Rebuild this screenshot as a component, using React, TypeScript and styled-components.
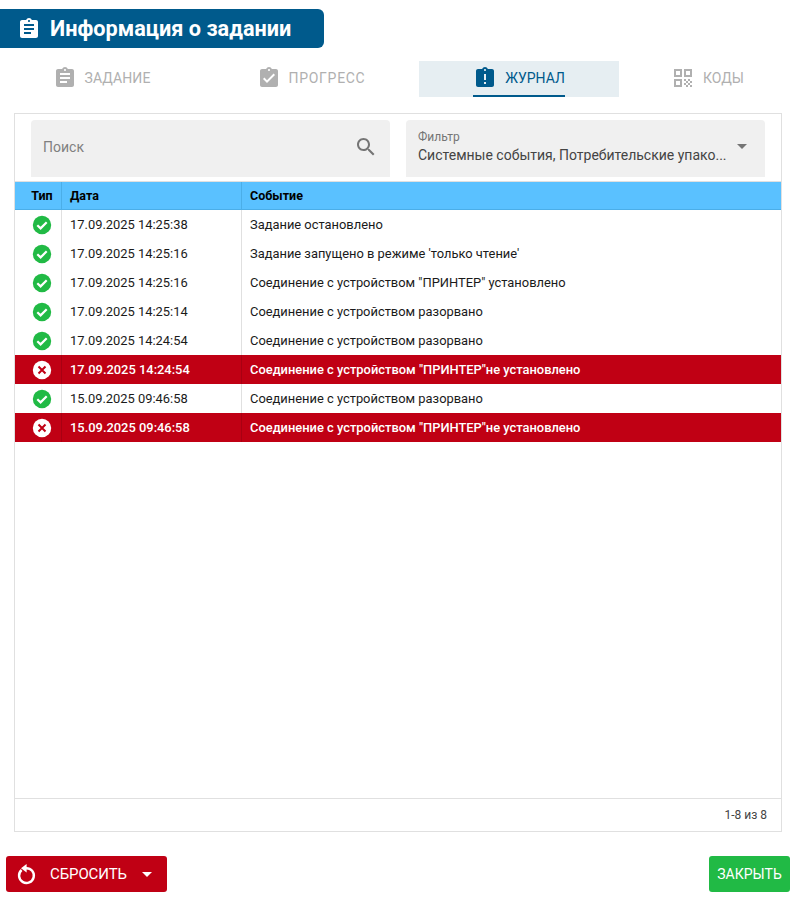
import styled, { createGlobalStyle } from 'styled-components';

const GlobalStyle = createGlobalStyle`
  html, body {
    margin: 0;
    padding: 0;
    background: #fff;
    font-family: Roboto, "Liberation Sans", sans-serif;
  }
`;

const blue = '#005a8c';
const red = '#c00014';
const green = '#21ba45';

const ICONS = {
  task: 'M19 3h-4.18C14.4 1.84 13.3 1 12 1c-1.3 0-2.4.84-2.82 2H5c-1.1 0-2 .9-2 2v14c0 1.1.9 2 2 2h14c1.1 0 2-.9 2-2V5c0-1.1-.9-2-2-2zm-7 0c.55 0 1 .45 1 1s-.45 1-1 1-1-.45-1-1 .45-1 1-1zm2 14H7v-2h7v2zm3-4H7v-2h10v2zm0-4H7V7h10v2z',
  progress: 'M19 3h-4.18C14.4 1.84 13.3 1 12 1c-1.3 0-2.4.84-2.82 2H5c-1.1 0-2 .9-2 2v14c0 1.1.9 2 2 2h14c1.1 0 2-.9 2-2V5c0-1.1-.9-2-2-2zm-7 0c.55 0 1 .45 1 1s-.45 1-1 1-1-.45-1-1 .45-1 1-1zm-2 14l-4-4 1.41-1.41L10 14.17l6.59-6.59L18 9l-8 8z',
  journal: 'M19 3h-4.18C14.4 1.84 13.3 1 12 1c-1.3 0-2.4.84-2.82 2H5c-1.1 0-2 .9-2 2v14c0 1.1.9 2 2 2h14c1.1 0 2-.9 2-2V5c0-1.1-.9-2-2-2zm-6 15h-2v-2h2v2zm0-4h-2V8h2v6zm-1-9c-.55 0-1-.45-1-1s.45-1 1-1 1 .45 1 1-.45 1-1 1z',
  codes: 'M3 11h8V3H3v8zm2-6h4v4H5V5zM3 21h8v-8H3v8zm2-6h4v4H5v-4zM13 3v8h8V3h-8zm6 6h-4V5h4v4zM13 13h2v2h-2zM15 15h2v2h-2zM13 17h2v2h-2zM15 19h2v2h-2zM17 13h2v2h-2zM19 15h2v2h-2zM17 17h2v2h-2zM19 19h2v2h-2z',
  search: 'M15.5 14h-.79l-.28-.27C15.41 12.59 16 11.11 16 9.5 16 5.91 13.09 3 9.5 3S3 5.91 3 9.5 5.91 16 9.5 16c1.61 0 3.09-.59 4.23-1.57l.27.28v.79l5 4.99L20.49 19l-4.99-5zm-6 0C7.01 14 5 11.99 5 9.5S7.01 5 9.5 5 14 7.01 14 9.5 11.99 14 9.5 14z',
};

type IconName = keyof typeof ICONS;

const tabs: { name: string; icon: IconName; active?: boolean; spacing?: number }[] = [
  { name: 'ЗАДАНИЕ', icon: 'task', spacing: 0.1 },
  { name: 'ПРОГРЕСС', icon: 'progress', spacing: 0.7 },
  { name: 'ЖУРНАЛ', icon: 'journal', active: true },
  { name: 'КОДЫ', icon: 'codes' },
];

const rows = [
  { date: '17.09.2025 14:25:38', text: 'Задание остановлено' },
  { date: '17.09.2025 14:25:16', text: "Задание запущено в режиме 'только чтение'" },
  { date: '17.09.2025 14:25:16', text: 'Соединение с устройством "ПРИНТЕР" установлено' },
  { date: '17.09.2025 14:25:14', text: 'Соединение с устройством разорвано' },
  { date: '17.09.2025 14:24:54', text: 'Соединение с устройством разорвано' },
  { date: '17.09.2025 14:24:54', text: 'Соединение с устройством "ПРИНТЕР"не установлено', error: true },
  { date: '15.09.2025 09:46:58', text: 'Соединение с устройством разорвано' },
  { date: '15.09.2025 09:46:58', text: 'Соединение с устройством "ПРИНТЕР"не установлено', error: true },
];

const Page = styled.div`
  width: 796px;
  height: 899px;
  display: flex;
  flex-direction: column;
  padding-top: 9px;
  box-sizing: border-box;
  overflow: hidden;
`;

const Title = styled.div`
  width: 324px;
  height: 39px;
  box-sizing: border-box;
  padding-left: 17px;
  display: flex;
  align-items: center;
  gap: 9px;
  background: ${blue};
  color: #fff;
  border-radius: 0 6px 6px 0;
  font-size: 21.7px;
  font-weight: 700;
`;

const Tabs = styled.div`
  display: grid;
  grid-template-columns: 203px 216px 200px 177px;
  height: 36px;
  margin-top: 13px;
`;

const Tab = styled.div<{ $active?: boolean }>`
  display: flex;
  justify-content: center;
  background: ${p => (p.$active ? '#e6eef2' : 'transparent')};
  color: ${p => (p.$active ? blue : '#b0b0b0')};
`;

const TabInner = styled.div<{ $active?: boolean }>`
  display: flex;
  align-items: center;
  gap: 8px;
  height: 36px;
  box-sizing: border-box;
  font-size: 14px;
  border-bottom: 2px solid ${p => (p.$active ? blue : 'transparent')};
`;

const TabLabel = styled.span<{ $spacing?: number }>`
  letter-spacing: ${p => p.$spacing ?? 0}px;
`;

const Card = styled.div`
  width: 768px;
  height: 719px;
  margin: 16px 0 0 14px;
  box-sizing: border-box;
  border: 1px solid #e0e0e0;
  display: flex;
  flex-direction: column;
`;

const Filters = styled.div`
  display: flex;
  gap: 16px;
  padding: 6px 16px 4px 16px;
  border-bottom: 1px solid #e0e0e0;
`;

const Field = styled.div`
  flex: 1;
  min-width: 0;
  height: 57px;
  box-sizing: border-box;
  background: #f0f0f0;
  border-radius: 4px 4px 0 0;
  display: flex;
  align-items: center;
  justify-content: space-between;
  padding: 0 12px 4px;
  color: #757575;
`;

const Placeholder = styled.span`
  font-size: 14px;
  color: #808080;
`;

const FilterText = styled.div`
  min-width: 0;
  display: flex;
  flex-direction: column;
  gap: 3px;
`;

const FilterLabel = styled.span`
  font-size: 12px;
  color: #757575;
`;

const FilterValue = styled.span`
  font-size: 14px;
  color: #444;
  white-space: nowrap;
`;

const Caret = styled.span`
  width: 0;
  height: 0;
  margin: 0 6px 0 8px;
  border-left: 5px solid transparent;
  border-right: 5px solid transparent;
  border-top: 5px solid #757575;
`;

const TableHead = styled.div`
  display: grid;
  grid-template-columns: 47px 180px 1fr;
  height: 27px;
  background: #5ac1ff;
  font-size: 12.5px;
  font-weight: 700;
  color: #000;
  border-bottom: 1px solid #4baee8;
`;

const HeadCell = styled.div<{ $center?: boolean }>`
  display: flex;
  align-items: center;
  justify-content: ${p => (p.$center ? 'center' : 'flex-start')};
  padding-left: 8px;
  border-right: 1px solid #4baee8;
  &:last-child {
    border-right: none;
  }
`;

const TableBody = styled.div`
  flex: 1;
`;

const Row = styled.div<{ $error?: boolean }>`
  display: grid;
  grid-template-columns: 47px 180px 1fr;
  height: 29px;
  font-size: 12.9px;
  font-weight: ${p => (p.$error ? 500 : 400)};
  color: ${p => (p.$error ? '#fff' : '#1a1a1a')};
  background: ${p => (p.$error ? red : '#fff')};
`;

const Cell = styled.div<{ $center?: boolean; $error?: boolean }>`
  display: flex;
  align-items: center;
  justify-content: ${p => (p.$center ? 'center' : 'flex-start')};
  padding-left: 8px;
  border-right: 1px solid ${p => (p.$error ? '#a80012' : '#e0e0e0')};
  &:last-child {
    border-right: none;
  }
`;

const Footer = styled.div`
  height: 32px;
  border-top: 1px solid #e0e0e0;
  display: flex;
  align-items: center;
  justify-content: flex-end;
  padding-right: 14px;
  font-size: 12px;
  color: #444;
`;

const Actions = styled.div`
  display: flex;
  justify-content: space-between;
  padding: 24px 6px 0;
`;

const Button = styled.div<{ $color: string }>`
  height: 36px;
  box-sizing: border-box;
  display: flex;
  align-items: center;
  background: ${p => p.$color};
  color: #fff;
  border-radius: 3px;
  font-size: 14px;
`;

const ResetButton = styled(Button)`
  width: 161px;
  padding-left: 8px;
  gap: 12px;
  font-size: 15px;
  letter-spacing: -0.1px;
`;

const CloseButton = styled(Button)`
  width: 81px;
  justify-content: center;
`;

const ButtonCaret = styled.span`
  width: 0;
  height: 0;
  margin-left: 3px;
  border-left: 5.5px solid transparent;
  border-right: 5.5px solid transparent;
  border-top: 5.5px solid #fff;
`;

function Icon({ name, size = 24 }: { name: IconName; size?: number }) {
  return (
    <svg width={size} height={size} viewBox="0 0 24 24" fill="currentColor">
      <path d={ICONS[name]} />
    </svg>
  );
}

function RestartIcon() {
  return (
    <svg width="24" height="24" viewBox="0 0 24 24" fill="none">
      <path d="M7.6 8A7.4 7.4 0 1 0 12 6.2" stroke="#fff" strokeWidth="2.4" />
      <path d="M12.6 2v8.4L7 6.2z" fill="#fff" />
    </svg>
  );
}

function StatusIcon({ error }: { error?: boolean }) {
  if (error) {
    return (
      <svg width="20" height="20" viewBox="0 0 20 20">
        <circle cx="10" cy="10" r="9.2" fill="#fff" />
        <path d="M6.5 6.5l7 7M13.5 6.5l-7 7" stroke={red} strokeWidth="2" fill="none" />
      </svg>
    );
  }
  return (
    <svg width="20" height="20" viewBox="0 0 20 20">
      <circle cx="10" cy="10" r="9.2" fill={green} />
      <path d="M5.3 10.2l3.3 3.2 6.1-6.1" stroke="#fff" strokeWidth="2.2" fill="none" />
    </svg>
  );
}

export default function App() {
  return (
    <Page>
      <GlobalStyle />
      <Title>
        <Icon name="task" />
        Информация о задании
      </Title>
      <Tabs>
        {tabs.map(tab => (
          <Tab key={tab.name} $active={tab.active}>
            <TabInner $active={tab.active}>
              <Icon name={tab.icon} />
              <TabLabel $spacing={tab.spacing}>{tab.name}</TabLabel>
            </TabInner>
          </Tab>
        ))}
      </Tabs>
      <Card>
        <Filters>
          <Field>
            <Placeholder>Поиск</Placeholder>
            <Icon name="search" />
          </Field>
          <Field>
            <FilterText>
              <FilterLabel>Фильтр</FilterLabel>
              <FilterValue>Системные события, Потребительские упако...</FilterValue>
            </FilterText>
            <Caret />
          </Field>
        </Filters>
        <TableHead>
          <HeadCell $center>Тип</HeadCell>
          <HeadCell>Дата</HeadCell>
          <HeadCell>Событие</HeadCell>
        </TableHead>
        <TableBody>
          {rows.map((row, i) => (
            <Row key={i} $error={row.error}>
              <Cell $center $error={row.error}><StatusIcon error={row.error} /></Cell>
              <Cell $error={row.error}>{row.date}</Cell>
              <Cell>{row.text}</Cell>
            </Row>
          ))}
        </TableBody>
        <Footer>1-8 из 8</Footer>
      </Card>
      <Actions>
        <ResetButton $color={red}>
          <RestartIcon />
          СБРОСИТЬ
          <ButtonCaret />
        </ResetButton>
        <CloseButton $color={green}>ЗАКРЫТЬ</CloseButton>
      </Actions>
    </Page>
  );
}
